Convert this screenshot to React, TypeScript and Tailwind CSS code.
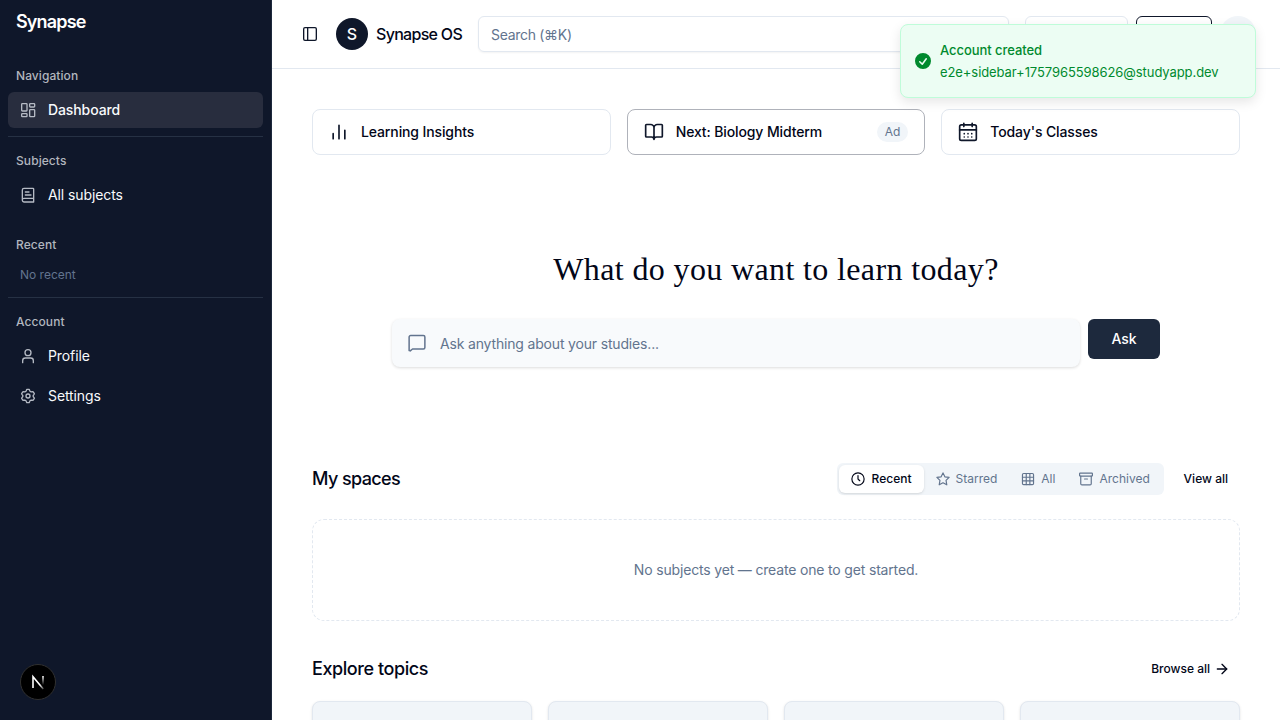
import type { ReactNode } from "react";
import { ArrowRight } from "lucide-react";

type IconProps = { className?: string; w?: number; children: ReactNode };

function Icon({ className = "size-4", w = 2, children }: IconProps) {
  return (
    <svg viewBox="0 0 24 24" className={`shrink-0 ${className}`} fill="none" stroke="currentColor" strokeWidth={w} strokeLinecap="round" strokeLinejoin="round">
      {children}
    </svg>
  );
}

function GroupLabel({ children }: { children: ReactNode }) {
  return <div className="flex h-8 items-center px-2 text-xs font-[450] tracking-[0.08px] text-[#b2b6be]">{children}</div>;
}

function NavItem({ icon, label, active }: { icon: ReactNode; label: string; active?: boolean }) {
  return (
    <a className={`flex h-9 items-center gap-3 rounded-md px-3 text-sm tracking-[-0.1px] text-slate-50 ${active ? "bg-[#282d3e] font-medium" : ""}`}>
      <span className="flex text-[#b5bac4]">{icon}</span>
      {label}
    </a>
  );
}

function Sidebar() {
  return (
    <aside className="relative flex h-full w-[272px] shrink-0 flex-col border-r border-[#1d293d] bg-[#0f172a] px-2">
      <div className="flex h-11 items-center px-2 text-lg font-semibold tracking-[-0.85px] text-white">Synapse</div>
      <section className="mt-4 border-b border-[#263144] pb-2">
        <GroupLabel>Navigation</GroupLabel>
        <NavItem
          active
          label="Dashboard"
          icon={<Icon><rect x="2.5" y="2.5" width="8" height="11" rx="1" /><rect x="14.5" y="2.5" width="7.5" height="5" rx="1" /><rect x="14.5" y="11.5" width="7.5" height="10.5" rx="1" /><rect x="2.5" y="17.5" width="8" height="4.5" rx="1" /></Icon>}
        />
      </section>
      <section className="pt-2">
        <GroupLabel>Subjects</GroupLabel>
        <NavItem
          label="All subjects"
          icon={<Icon><path d="M3.5 19V4.5A2.5 2.5 0 0 1 6 2h13.5a1 1 0 0 1 1 1v19.5H6A2.8 2.8 0 0 1 3.5 20a2.5 2.5 0 0 1 2.5-3h14.5M8 7.5h5.5M8 12h8.5" /></Icon>}
        />
      </section>
      <section className="mt-4 h-[69px] border-b border-[#263144]">
        <GroupLabel>Recent</GroupLabel>
        <div className="px-3 pt-1.5 text-xs text-slate-500">No recent</div>
      </section>
      <section className="pt-2">
        <GroupLabel>Account</GroupLabel>
        <div className="flex flex-col gap-1">
          <NavItem label="Profile" icon={<Icon><circle cx="12" cy="7" r="4.5" /><path d="M4 22v-3a4 4 0 0 1 4-4h8a4 4 0 0 1 4 4v3" /></Icon>} />
          <NavItem
            label="Settings"
            icon={<Icon><path d="M9.7 3.2 10.3 2h3.4l.6 1.2.7 1.7 1.7 1 1.8-.3 1.4.1 1.7 2.9-.8 1.2-1 1.4v1.6l1 1.4.8 1.2-1.7 2.9-1.4.1-1.8-.3-1.7 1-.7 1.7-.6 1.2h-3.4l-.6-1.2L9 19.1l-1.7-1-1.8.3-1.4-.1-1.7-2.9.8-1.2 1-1.4v-1.6l-1-1.4-.8-1.2 1.7-2.9 1.4-.1 1.8.3 1.7-1z" /><circle cx="12" cy="12" r="3" /></Icon>}
          />
        </div>
      </section>
      <div className="absolute bottom-5 left-5 flex size-9 items-center justify-center rounded-full border border-[#303030] bg-black">
        <svg viewBox="0 0 14 16" className="h-4 w-3.5" fill="none">
          <defs>
            <linearGradient id="diag" x1="2" y1="2" x2="13" y2="15" gradientUnits="userSpaceOnUse"><stop offset="0.65" stopColor="#fff" /><stop offset="1" stopColor="#fff" stopOpacity="0.2" /></linearGradient>
            <linearGradient id="stem" x1="0" y1="2" x2="0" y2="11" gradientUnits="userSpaceOnUse"><stop stopColor="#fff" /><stop offset="1" stopColor="#fff" stopOpacity="0" /></linearGradient>
          </defs>
          <path d="M2 14V2.8L12.3 15" stroke="url(#diag)" strokeWidth="1.6" />
          <path d="M12 2v9" stroke="url(#stem)" strokeWidth="1.6" />
        </svg>
      </div>
    </aside>
  );
}

function Header() {
  return (
    <header className="flex h-[69px] shrink-0 items-center border-b border-slate-200 px-6 *:shrink-0">
      <button className="flex size-7 items-center justify-center text-[#0f172a]">
        <Icon><rect x="2.5" y="2.5" width="19" height="19" rx="2" /><path d="M8.5 3v18" /></Icon>
      </button>
      <div className="ml-3 flex size-8 items-center justify-center rounded-full bg-[#0f172a] text-base font-medium text-white">S</div>
      <div className="ml-2 w-[86px] text-base font-medium tracking-[-0.7px] whitespace-nowrap">Synapse OS</div>
      <div className="ml-4 flex h-9 w-[531px] items-center rounded-md border border-slate-200 px-3 pt-0.5 text-sm tracking-[-0.3px] text-slate-500 shadow-xs">Search (⌘K)</div>
      <div className="ml-4 h-9 w-[103px] rounded-md border border-slate-200" />
      <div className="ml-2 h-9 w-[76px] rounded-md border border-[#0f172a]" />
      <div className="ml-2 size-9 rounded-full bg-slate-100" />
    </header>
  );
}

function QuickCard({ icon, label, badge, strong }: { icon: ReactNode; label: string; badge?: string; strong?: boolean }) {
  return (
    <div className={`flex h-[46px] items-center rounded-lg border px-4 ${strong ? "border-[#afb2ba]" : "border-slate-200"}`}>
      <span className="flex w-5 text-[#0f172a]">{icon}</span>
      <span className="ml-3 text-sm font-medium tracking-[-0.12px]">{label}</span>
      {badge && <span className="ml-auto flex h-5 items-center rounded-full bg-slate-100 px-2 text-xs text-slate-500">{badge}</span>}
    </div>
  );
}

function Tab({ icon, label, active }: { icon: ReactNode; label: string; active?: boolean }) {
  return (
    <button className={`flex h-7 items-center rounded-md px-3 text-xs whitespace-nowrap ${active ? "gap-[7px] bg-white font-medium text-[#020618] shadow-sm" : "gap-1.5 text-slate-500"}`}>
      {icon}
      {label}
    </button>
  );
}

function Toast() {
  return (
    <div className="absolute top-6 right-6 flex h-[74px] w-[356px] items-center rounded-lg border border-[#bffcd9] bg-[#ecfdf3] pl-3.5 text-[#008a2e] shadow-[0_4px_12px_rgba(0,0,0,0.1)]">
      <svg viewBox="0 0 20 20" className="size-5 shrink-0 -ml-0.5" fill="currentColor">
        <path fillRule="evenodd" clipRule="evenodd" d="M10 18a8 8 0 1 0 0-16 8 8 0 0 0 0 16Zm3.86-9.81a.75.75 0 0 0-1.22-.88l-3.48 4.8-1.88-1.89a.75.75 0 1 0-1.06 1.06l2.5 2.5a.75.75 0 0 0 1.14-.09l4-5.5Z" />
      </svg>
      <div className="ml-[7px] text-[13px]">
        <div className="leading-5 font-medium tracking-[-0.06px]">Account created</div>
        <div className="mt-0.5 leading-5 tracking-[-0.08px]">e2e+sidebar+1757965598626@studyapp.dev</div>
      </div>
    </div>
  );
}

export default function App() {
  return (
    <div className="relative flex h-screen w-full overflow-hidden bg-white font-['Inter','DejaVu_Sans',sans-serif] text-[#020618]">
      <Sidebar />
      <div className="flex min-w-0 flex-1 flex-col">
        <Header />
        <main className="flex flex-1 flex-col overflow-hidden px-10 pt-10">
          <div className="grid shrink-0 grid-cols-3 gap-4">
            <QuickCard label="Learning Insights" icon={<Icon className="size-5"><path d="M5 20v-6M12 20V4M19 20V10" /></Icon>} />
            <QuickCard strong badge="Ad" label="Next: Biology Midterm" icon={<Icon className="size-5"><path d="M12 7v14M3 18a1 1 0 0 1-1-1V4a1 1 0 0 1 1-1h5a4 4 0 0 1 4 4 4 4 0 0 1 4-4h5a1 1 0 0 1 1 1v13a1 1 0 0 1-1 1h-6a3 3 0 0 0-3 3 3 3 0 0 0-3-3z" /></Icon>} />
            <QuickCard label="Today's Classes" icon={<Icon className="size-5"><rect x="2" y="3.5" width="20" height="18.5" rx="2" /><path d="M2 9.5h20M7 1.5v4M17 1.5v4M7.5 14h.01M12 14h.01M16.5 14h.01M7.5 18h.01M12 18h.01M16.5 18h.01" /></Icon>} />
          </div>
          <h1 className="mt-[94px] h-10 shrink-0 text-center font-['Liberation_Serif',serif] text-[32px] leading-10 tracking-[0.37px]">What do you want to learn today?</h1>
          <div className="mx-auto mt-[30px] flex w-[768px] shrink-0 items-start gap-2">
            <div className="flex h-12 flex-1 items-center rounded-lg bg-slate-50 px-4 text-sm tracking-[-0.17px] text-slate-500 shadow-[0_1px_3px_rgba(0,0,0,0.14)]">
              <Icon className="size-[18px]"><path d="M1.5 22V4a2 2 0 0 1 2-2h17a2 2 0 0 1 2 2v14a2 2 0 0 1-2 2H6l-3 2.5z" /></Icon>
              <span className="ml-3.5 pt-0.5">Ask anything about your studies...</span>
            </div>
            <button className="h-10 w-[72px] rounded-md bg-slate-800 text-sm font-medium text-white">Ask</button>
          </div>
          <div className="mt-24 flex h-8 shrink-0 items-center">
            <h2 className="text-lg font-medium tracking-[-0.6px]">My spaces</h2>
            <div className="ml-auto flex h-8 w-[327px] items-center rounded-md bg-slate-100 p-0.5">
              <Tab active label="Recent" icon={<Icon className="size-3.5"><circle cx="12" cy="12" r="10.5" /><path d="M12 6v6l3 3" /></Icon>} />
              <Tab label="Starred" icon={<Icon className="size-3.5"><path d="m12 1.5 3.2 6.8 7.3 1-5.3 5.2 1.3 7.5-6.5-3.6L5.5 22l1.3-7.5L1.5 9.3l7.3-1z" /></Icon>} />
              <Tab label="All" icon={<Icon className="size-3.5"><rect x="2.5" y="2.5" width="19" height="19" rx="2" /><path d="M2.5 9h19M2.5 15.2h19M9 2.5v19M15.2 2.5v19" /></Icon>} />
              <Tab label="Archived" icon={<Icon className="size-3.5"><rect x="1" y="2" width="22" height="5" rx="1" /><path d="M3 7v13a2 2 0 0 0 2 2h14a2 2 0 0 0 2-2V7M9.5 12h5" /></Icon>} />
            </div>
            <button className="ml-2 px-3 text-xs font-medium whitespace-nowrap">View all</button>
          </div>
          <div className="mt-6 flex h-[102px] shrink-0 items-center justify-center rounded-xl border border-dashed border-slate-200 text-sm tracking-[-0.17px] text-slate-500">No subjects yet — create one to get started.</div>
          <div className="mt-8 flex h-8 shrink-0 items-center justify-between">
            <h2 className="text-lg font-medium tracking-[-0.42px]">Explore topics</h2>
            <button className="flex items-center gap-1 px-2.5 text-xs font-medium">Browse all <ArrowRight className="size-4" /></button>
          </div>
          <div className="mt-4 grid shrink-0 grid-cols-4 gap-4">
            {[0, 1, 2, 3].map((n) => <div key={n} className="h-28 rounded-lg border border-slate-200 bg-slate-100 shadow-sm" />)}
          </div>
        </main>
      </div>
      <Toast />
    </div>
  );
}
